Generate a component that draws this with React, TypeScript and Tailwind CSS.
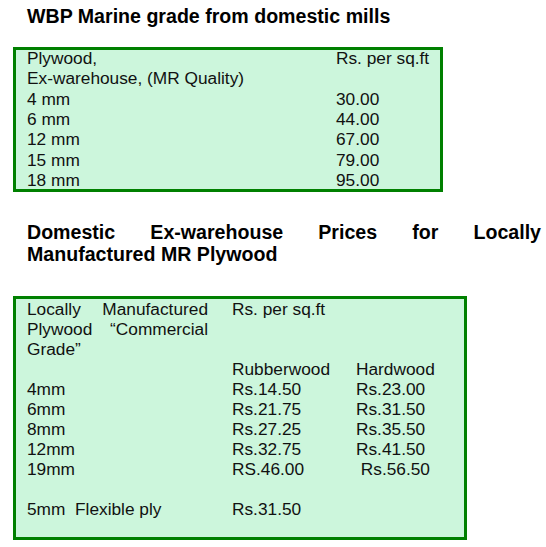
import React from "react";

const font = { fontFamily: '"Liberation Sans", Arial, sans-serif' };

export default function App() {
  const rows1: [string, string][] = [
    ["4 mm", "30.00"],
    ["6 mm", "44.00"],
    ["12 mm", "67.00"],
    ["15 mm", "79.00"],
    ["18 mm", "95.00"],
  ];
  const rows2: [string, string, string][] = [
    ["4mm", "Rs.14.50", "Rs.23.00"],
    ["6mm", "Rs.21.75", "Rs.31.50"],
    ["8mm", "Rs.27.25", "Rs.35.50"],
    ["12mm", "Rs.32.75", "Rs.41.50"],
    ["19mm", "RS.46.00", "\u00a0Rs.56.50"],
  ];
  return (
    <div
      className="w-[546px] h-[547px] bg-white text-[#111] font-['Liberation_Sans',Arial,sans-serif]"
      style={font}
    >
      <h1 className="pt-[5px] pl-[27px] text-[19.6px] leading-[22px] font-bold text-black">
        WBP Marine grade from domestic mills
      </h1>

      <div className="mt-[20px] ml-[13px] w-[430px] h-[145px] border-[3px] border-[#008000] bg-[#ccf6dc] pl-[11px] text-[17.3px] leading-[20.33px]">
        <div className="-mt-[2px] grid grid-cols-[309px_1fr]">
          <div>Plywood,</div>
          <div>Rs. per sq.ft</div>
          <div>Ex-warehouse, (MR Quality)</div>
          <div></div>
          {rows1.map(([a, b]) => (
            <React.Fragment key={a}>
              <div>{a}</div>
              <div>{b}</div>
            </React.Fragment>
          ))}
        </div>
      </div>

      <h2 className="mt-[30px] pl-[27px] pr-[5px] text-[19.6px] leading-[21.7px] font-bold text-black text-justify">
        Domestic Ex-warehouse Prices for Locally Manufactured MR Plywood
      </h2>

      <div className="mt-[31px] ml-[13px] w-[454px] h-[244px] border-[3px] border-[#008000] bg-[#ccf6dc] pl-[11px] text-[17.3px] leading-[20px]">
        <div className="flex">
          <div className="w-[205px]">
            <div className="w-[181px] text-justify">
              Locally Manufactured Plywood &ldquo;Commercial Grade&rdquo;
            </div>
          </div>
          <div>Rs. per sq.ft</div>
        </div>
        <div className="grid grid-cols-[205px_124px_1fr]">
          <div></div>
          <div>Rubberwood</div>
          <div>Hardwood</div>
          {rows2.map(([a, b, c]) => (
            <React.Fragment key={a}>
              <div>{a}</div>
              <div>{b}</div>
              <div className="whitespace-pre">{c}</div>
            </React.Fragment>
          ))}
          <div className="h-[20px]"></div>
          <div></div>
          <div></div>
          <div className="whitespace-pre">5mm  Flexible ply</div>
          <div>Rs.31.50</div>
          <div></div>
        </div>
      </div>
    </div>
  );
}
